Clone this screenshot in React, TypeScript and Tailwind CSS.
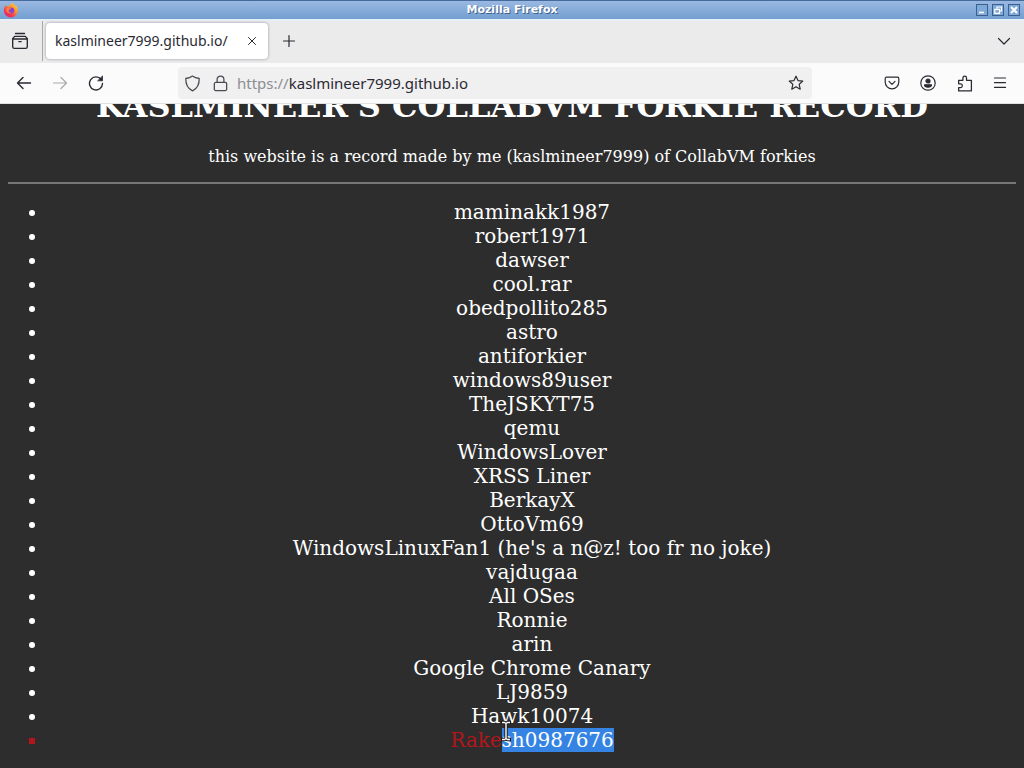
import type { ReactNode } from 'react';

const forkies = [
  'maminakk1987',
  'robert1971',
  'dawser',
  'cool.rar',
  'obedpollito285',
  'astro',
  'antiforkier',
  'windows89user',
  'TheJSKYT75',
  'qemu',
  'WindowsLover',
  'XRSS Liner',
  'BerkayX',
  'OttoVm69',
  "WindowsLinuxFan1 (he's a n@z! too fr no joke)",
  'vajdugaa',
  'All OSes',
  'Ronnie',
  'arin',
  'Google Chrome Canary',
  'LJ9859',
  'Hawk10074',
];

const Icon = ({ children, className = 'size-4' }: { children: ReactNode; className?: string }) => (
  <svg
    viewBox="0 0 16 16"
    className={className}
    fill="none"
    stroke="currentColor"
    strokeWidth="1.2"
    strokeLinecap="round"
    strokeLinejoin="round"
    aria-hidden="true"
  >
    {children}
  </svg>
);

const ToolButton = ({ label, children, disabled }: { label: string; children: ReactNode; disabled?: boolean }) => (
  <button
    type="button"
    aria-label={label}
    disabled={disabled}
    className="flex size-9 shrink-0 items-center justify-center text-[#2b2a33] disabled:text-[#a9a9ac]"
  >
    {children}
  </button>
);

const WindowButton = ({ label, children }: { label: string; children: ReactNode }) => (
  <button
    type="button"
    aria-label={label}
    className="flex size-3 items-center justify-center border border-[#3b5f8f] bg-[#7fa9d8] text-white"
  >
    <svg viewBox="0 0 10 10" className="size-full" fill="none" stroke="currentColor" strokeWidth="1.6" aria-hidden="true">
      {children}
    </svg>
  </button>
);

const FirefoxLogo = () => (
  <svg viewBox="0 0 16 16" className="ml-[-1px] size-4" aria-hidden="true">
    <defs>
      <linearGradient id="flame" x1="1" y1="0" x2="0.2" y2="1">
        <stop offset="0" stopColor="#ffe14a" />
        <stop offset="0.4" stopColor="#ff9a2b" />
        <stop offset="0.75" stopColor="#f5364d" />
        <stop offset="1" stopColor="#d4267c" />
      </linearGradient>
    </defs>
    <path
      d="M9.800.6c.4 1.300 1.200 2 2.300 3.100.5-.1.600-.4.700-.8C14.500 4.600 15.100 7 14.700 9.300 14.200 12.700 11.400 15.400 8 15.400c-3.800 0-7-2.900-7-6.700 0-2.200.5-4 2-5.900 0 .8.200 1.300.6 1.800.8-.5 1.500-.5 2.400-.3C7 2.700 8.300 1.600 9.800.6z"
      fill="url(#flame)"
    />
    <circle cx="8.300" cy="8.600" r="3" fill="#8a45c9" />
    <path d="M3.500 5.800c1.500-.6 3-.2 4.500.9-.8.800-2 .7-2.300 1.700-.2 1.300 1.200 2.300 2.800 2-1.700 1.900-5.200.8-5.400-1.800z" fill="#ff7a36" />
  </svg>
);

const TitleBar = () => (
  <header className="grid h-[19px] shrink-0 grid-cols-3 items-center border-t border-[#456a9c] bg-linear-to-b from-[#9ab8e2] to-[#729fcf] px-1">
    <FirefoxLogo />
    <h1 className="text-center font-['DejaVu_Sans',sans-serif] text-[11px] leading-4 font-bold whitespace-nowrap text-white [text-shadow:1px_1px_0_#3d5f8c]">
      Mozilla Firefox
    </h1>
    <div className="flex justify-end gap-1">
      <WindowButton label="Minimize">
        <path d="M2 7.500h5" />
      </WindowButton>
      <WindowButton label="Restore">
        <path d="M4 3.500V2h4.500v4H7M1.800 4.300h4.700v4H1.800z" strokeWidth="1.200" />
      </WindowButton>
      <WindowButton label="Close">
        <path d="M2 2l6 6M8 2L2 8" strokeWidth="2" />
      </WindowButton>
    </div>
  </header>
);

const TabStrip = () => (
  <div className="flex h-11 shrink-0 items-center border-t-2 border-[#e6eef8] bg-[#ebebeb] pb-[2px]">
    <div className="flex h-full w-[43px] items-center justify-center border-r border-[#a8a8aa] pr-[2px] text-[#2b2a33]">
      <button type="button" aria-label="View recent browsing" className="flex size-8 items-center justify-center">
        <Icon className="size-[18px]">
          <path d="M4 1.300h8M3.200 3.900h9.600l1.700 2v7.200a1.500 1.500 0 0 1-1.500 1.500H3a1.500 1.500 0 0 1-1.500-1.500V5.900zM1.700 6.200h12.600M7 8.600h2" />
        </Icon>
      </button>
    </div>
    <div className="ml-[3px] flex h-9 w-[222px] items-center justify-between rounded bg-white pr-2 pl-[9px] shadow-[0_0_3px_#8f8f9d]">
      <span className="text-[14px] leading-5 whitespace-nowrap">kaslmineer7999.github.io/</span>
      <button type="button" aria-label="Close tab" className="flex size-4 items-center justify-center">
        <Icon className="size-4">
          <path d="M4.500 4.500l7 7M11.500 4.500l-7 7" strokeWidth="1" />
        </Icon>
      </button>
    </div>
    <div className="ml-[3px] flex flex-1 items-center justify-between pr-[2px]">
      <ToolButton label="New tab">
        <Icon>
          <path d="M8 2.500v11M2.500 8h11" />
        </Icon>
      </ToolButton>
      <ToolButton label="List all tabs">
        <Icon>
          <path d="M2.500 5.500L8 11l5.500-5.500" />
        </Icon>
      </ToolButton>
    </div>
  </div>
);

const NavBar = () => (
  <nav className="flex h-[41px] shrink-0 items-center border-b border-[#e0e0e2] bg-[#fbfbfc] px-[6px]">
    <ToolButton label="Back">
      <Icon>
        <path d="M14.500 8h-13M7 2.500L1.500 8 7 13.500" strokeWidth="1.400" />
      </Icon>
    </ToolButton>
    <ToolButton label="Forward" disabled>
      <Icon>
        <path d="M1.500 8h13M9 2.500L14.500 8 9 13.500" />
      </Icon>
    </ToolButton>
    <ToolButton label="Reload">
      <Icon>
        <path d="M13.200 4.500A6.500 6.500 0 1 0 14.500 8.500" strokeWidth="1.400" />
        <path d="M14.500 1.300v4.500H10z" fill="currentColor" strokeWidth="0.800" />
      </Icon>
    </ToolButton>
    <div className="ml-16 flex h-8 flex-1 items-center rounded bg-[#f0f0f1] pr-[6px] pl-[2px] text-[#4b4a52]">
      <button type="button" aria-label="Tracking protection" className="flex w-6 justify-center">
        <Icon className="size-[17px]">
          <path d="M8 1c2 1.500 4 2 6.300 2.300C14.500 8.500 13 12.500 8 15 3 12.500 1.500 8.500 1.700 3.300 4 3 6 2.500 8 1z" />
        </Icon>
      </button>
      <button type="button" aria-label="Site information" className="ml-1 flex w-6 justify-center">
        <Icon className="size-[17px]">
          <path d="M3.500 7h9a1.300 1.300 0 0 1 1.300 1.300v5a1.300 1.300 0 0 1-1.300 1.300h-9a1.300 1.300 0 0 1-1.300-1.300v-5A1.300 1.300 0 0 1 3.500 7zM4.800 7V4.200a3.200 3.200 0 0 1 6.400 0V7" />
        </Icon>
      </button>
      <a href="https://kaslmineer7999.github.io" className="ml-[5px] flex-1 text-[15px] leading-5 text-[#2b2a33]">
        <span className="text-[#8d8d92]">https://</span>kaslmineer7999.github.io
      </a>
      <button type="button" aria-label="Bookmark this page" className="flex w-5 justify-center text-[#2b2a33]">
        <Icon>
          <path d="M8 1.200l2 4.400 4.800.5-3.600 3.200 1 4.900L8 11.700l-4.200 2.500 1-4.900L1.200 6.100 6 5.600z" />
        </Icon>
      </button>
    </div>
    <div className="ml-[62px] flex">
      <ToolButton label="Save to Pocket">
        <Icon>
          <path d="M2.500 2.200h11A1.300 1.300 0 0 1 14.800 3.500V7A6.800 6.800 0 0 1 1.200 7V3.500A1.300 1.300 0 0 1 2.500 2.200zM5 6.300l3 3 3-3" />
        </Icon>
      </ToolButton>
      <ToolButton label="Account">
        <Icon>
          <circle cx="8" cy="8" r="7.200" />
          <circle cx="8" cy="6" r="2" fill="currentColor" />
          <path d="M4.500 9.800h7c0 1.300-1.500 2.400-3.500 2.400s-3.500-1.100-3.500-2.400z" fill="currentColor" />
        </Icon>
      </ToolButton>
      <ToolButton label="Extensions">
        <Icon className="size-[17px]">
          <path d="M2.500 8.300V5h4V2.800a1.700 1.700 0 0 1 3.400 0V5h4.600v10H2.500v-3.200h1.700a1.750 1.750 0 0 0 0-3.500z" />
        </Icon>
      </ToolButton>
      <ToolButton label="Application menu">
        <Icon>
          <path d="M2.500 3h11M2.500 7.700h11M2.500 12.400h11" />
        </Icon>
      </ToolButton>
    </div>
  </nav>
);

// text caret pointer, sits on top of the selection edge
const Pointer = () => (
  <svg viewBox="0 0 12 22" className="absolute -top-2 -left-0.5 h-[22px] w-3" fill="none" aria-hidden="true">
    <path d="M1 2.500h3.500L6 3.500l1.500-1H11M6 3v16M1 19.500h3.500l1.500-1 1.500 1H11" stroke="#1a1a1a" strokeWidth="3.400" />
    <path d="M2 2.500h2.500L6 3.500l1.500-1H10M6 3v16M2 19.500h2.500l1.500-1 1.500 1H10" stroke="#ffffff" strokeWidth="1.400" />
  </svg>
);

const RecordPage = () => (
  <main className="min-h-0 flex-1 overflow-hidden bg-[#2d2d2d] px-2 font-['DejaVu_Serif',serif] text-white">
    <h1 className="-mt-4 text-center text-[32px] leading-9 font-bold">KASLMINEER'S COLLABVM FORKIE RECORD</h1>
    <p className="mt-[23px] text-center text-base leading-5">
      this website is a record made by me (kaslmineer7999) of CollabVM forkies
    </p>
    <hr className="mt-[15px] border-t-2 border-[#777777]" />
    <ul className="mt-4 list-disc pl-10 text-center text-[20px] leading-6">
      {forkies.map((name) => (
        <li key={name}>{name}</li>
      ))}
      <li className="list-[square] text-[#b3151c]">
        Rake
        <span className="relative inline-block bg-[#3584e4] text-white">
          sh0987676
          <Pointer />
        </span>
      </li>
    </ul>
  </main>
);

export default function App() {
  return (
    <div className="flex h-screen flex-col overflow-hidden font-['Noto_Sans',sans-serif] text-[#2b2a33]">
      <TitleBar />
      <TabStrip />
      <NavBar />
      <RecordPage />
    </div>
  );
}
